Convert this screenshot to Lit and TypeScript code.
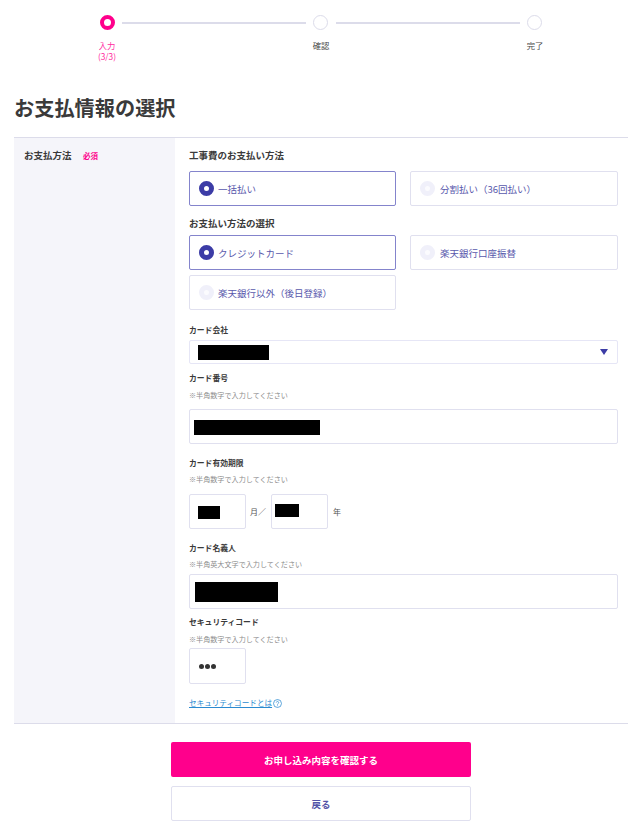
import { LitElement, html, css } from "lit";
import { customElement } from "lit/decorators.js";

@customElement("app-root")
export class AppRoot extends LitElement {
  static styles = css`
    :host { display: block; width: 640px; height: 832px; overflow: hidden; background: #fff; color: #333; font-family: "Noto Sans CJK JP", "Noto Sans", sans-serif; }
    * { box-sizing: border-box; }
    .stepper { display: flex; padding: 15px 0 0 92px; height: 93px; align-items: flex-start; }
    .step { width: 30px; display: flex; flex-direction: column; align-items: center; font-size: 8.3px; line-height: 11px; color: #4a4a4a; text-align: center; flex: none; }
    .step.active { color: #ff2aa0; }
    .dot { width: 15px; height: 15px; border-radius: 50%; border: 1px solid #dcdcea; background: #fff; margin-bottom: 10px; }
    .step:not(.active) .dot { margin-right: 2px; }
    .step.active .dot { border: 4px solid #ff008c; }
    .line { width: 184px; height: 2px; background: #dcdcea; margin-top: 7px; flex: none; }
    h1 { margin: 0 0 0 14px; font-size: 20.2px; line-height: 30px; font-weight: 700; color: #3a3a3a; height: 30px; }
    .table { margin: 14px 12px 0 14px; border-top: 1px solid #dcdcea; border-bottom: 1px solid #dcdcea; display: flex; height: 587px; }
    .side { width: 161px; background: #f5f5fa; padding: 10px 0 0 10px; font-size: 9.5px; font-weight: 700; line-height: 14px; color: #3a3a3a; display: flex; gap: 11.5px; align-items: flex-start; flex: none; }
    .req { color: #ff008c; font-size: 7.5px; line-height: 15px; }
    .main { flex: 1; padding: 10px 10px 0 14px; }
    .head { font-size: 9.5px; font-weight: 700; line-height: 14px; color: #3a3a3a; }
    .radios { display: grid; grid-template-columns: 207px 208px; column-gap: 14px; row-gap: 5px; margin-top: 9px; }
    .radios.l1 { margin-top: 5px; }
    .radio { height: 35px; border: 1px solid #e0e0ef; border-radius: 2px; display: flex; align-items: center; padding-left: 9px; gap: 4px; font-size: 9.5px; color: #5858ac; background: #fff; }
    .radio:nth-child(even) { gap: 5px; }
    .radio.on { border-color: #8484cc; }
    .mark { width: 15px; height: 15px; border-radius: 50%; border: 5px solid #f0f0fa; background: #fbfbfe; flex: none; }
    .on .mark { border-color: #3c3ca6; background: #fff; }
    .head.second { margin-top: 10px; }
    .label { font-size: 7.8px; font-weight: 700; line-height: 12px; color: #3a3a3a; }
    .note { font-size: 7.1px; line-height: 10px; color: #8c8c8c; margin-top: 5px; }
    .note.wide { margin-top: 6px; }
    .box { border: 1px solid #e0e0ef; border-radius: 2px; background: #fff; display: flex; align-items: center; height: 35px; }
    .redact { background: #000; flex: none; }
    .select { height: 24px; margin-top: 4px; justify-content: space-between; padding: 0 9px 0 8px; border-color: #e6e6f6; }
    .select .redact { width: 71px; height: 15px; }
    .caret { width: 0; height: 0; border-left: 4px solid transparent; border-right: 4px solid transparent; border-top: 6px solid #3c3ca6; }
    .gap-md { margin-top: 14px; }
    .gap-lg { margin-top: 13px; }
    .gap-sm { margin-top: 8px; }
    .gap-xs { margin-top: 7px; }
    .field { margin-top: 9px; }
    .num .redact { width: 126px; height: 15px; margin-left: 4px; margin-top: 2px; }
    .expiry { display: flex; align-items: center; margin-top: 10px; font-size: 8px; color: #555; }
    .short { width: 57px; flex: none; }
    .mm { margin-right: 4px; }
    .mm .redact { width: 22px; height: 13px; margin-left: 8px; margin-top: 2px; }
    .yy .redact { width: 24px; height: 13px; margin-left: 3px; margin-top: -3px; }
    .sep { width: 21px; flex: none; }
    .yy { margin-right: 5px; }
    .name .redact { width: 83px; height: 20px; margin-left: 5px; margin-top: 1px; }
    .field6 { margin-top: 5px; }
    .cvv { height: 36px; padding-left: 9px; margin-top: 4px; }
    .dots { display: flex; gap: 1px; }
    .dots i { width: 5px; height: 5px; border-radius: 50%; background: #333; margin-top: 1px; }
    .link { display: flex; align-items: center; gap: 1px; margin-top: 13px; font-size: 7.6px; line-height: 12px; color: #2b8ad0; }
    .link span { text-decoration: underline; }
    .link svg { width: 9px; height: 9px; flex: none; }
    .actions { display: flex; flex-direction: column; align-items: center; gap: 9px; margin: 18px 0 0 2px; }
    .btn { width: 300px; height: 35px; border-radius: 2px; display: flex; align-items: center; justify-content: center; font-size: 9.5px; font-weight: 700; }
    .primary { background: #ff008c; color: #fff; }
    .secondary { background: #fff; border: 1px solid #e0e0ef; color: #5454a8; }
  `;

  render() {
    return html`
      <div class="stepper">
        <div class="step active"><div class="dot"></div>入力<br />(3/3)</div>
        <div class="line"></div>
        <div class="step"><div class="dot"></div>確認</div>
        <div class="line"></div>
        <div class="step"><div class="dot"></div>完了</div>
      </div>
      <h1>お支払情報の選択</h1>
      <div class="table">
        <div class="side"><span>お支払方法</span><span class="req">必須</span></div>
        <div class="main">
          <div class="head">工事費のお支払い方法</div>
          <div class="radios">
            <div class="radio on"><span class="mark"></span>一括払い</div>
            <div class="radio"><span class="mark"></span>分割払い（36回払い）</div>
          </div>
          <div class="head second">お支払い方法の選択</div>
          <div class="radios l1">
            <div class="radio on"><span class="mark"></span>クレジットカード</div>
            <div class="radio"><span class="mark"></span>楽天銀行口座振替</div>
            <div class="radio"><span class="mark"></span>楽天銀行以外（後日登録）</div>
          </div>
          <div class="label gap-md">カード会社</div>
          <div class="box select"><div class="redact"></div><div class="caret"></div></div>
          <div class="label gap-sm">カード番号</div>
          <div class="note wide">※半角数字で入力してください</div>
          <div class="box num field"><div class="redact"></div></div>
          <div class="label gap-lg">カード有効期限</div>
          <div class="note">※半角数字で入力してください</div>
          <div class="expiry">
            <div class="box short mm"><div class="redact"></div></div>
            <div class="sep">月／</div>
            <div class="box short yy"><div class="redact"></div></div>
            <div>年</div>
          </div>
          <div class="label gap-lg">カード名義人</div>
          <div class="note">※半角英大文字で入力してください</div>
          <div class="box name field6"><div class="redact"></div></div>
          <div class="label gap-xs">セキュリティコード</div>
          <div class="note wide">※半角数字で入力してください</div>
          <div class="box short cvv"><div class="dots"><i></i><i></i><i></i></div></div>
          <div class="link"><span>セキュリティコードとは</span>
            <svg viewBox="0 0 12 12" fill="none" stroke="#2b8ad0" stroke-width="1"><circle cx="6" cy="6" r="5.3"></circle><path d="M4.4 4.8a1.6 1.6 0 1 1 2.5 1.3c-.6.4-.9.7-.9 1.4"></path><path d="M6 8.6v1"></path></svg>
          </div>
        </div>
      </div>
      <div class="actions">
        <div class="btn primary">お申し込み内容を確認する</div>
        <div class="btn secondary">戻る</div>
      </div>
    `;
  }
}
